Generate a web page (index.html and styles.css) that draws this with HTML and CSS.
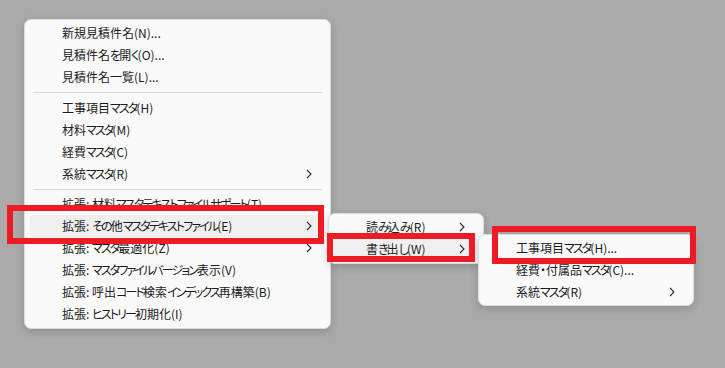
FILE: index.html
```html
<!DOCTYPE html>
<html lang="ja">
<head>
<meta charset="utf-8">
<title>Menu</title>
<link rel="stylesheet" href="styles.css">
</head>
<body>
<div class="desk">
  <div class="menu menu-main">
    <div class="item"><span class="label">新規見積件名(N)...</span></div>
    <div class="item"><span class="label">見積件名<span class="k">を</span>開<span class="k">く</span>(O)...</span></div>
    <div class="item"><span class="label">見積件名一覧(L)...</span></div>
    <div class="sep"></div>
    <div class="item"><span class="label">工事項目<span class="k">マスタ</span>(H)</span></div>
    <div class="item"><span class="label">材料<span class="k">マスタ</span>(M)</span></div>
    <div class="item"><span class="label">経費<span class="k">マスタ</span>(C)</span></div>
    <div class="item"><span class="label">系統<span class="k">マスタ</span>(R)</span><svg class="chev" viewBox="0 0 6 10" width="6" height="10"><polyline points="1,1 5,5 1,9"/></svg></div>
    <div class="sep"></div>
    <div class="item"><span class="label">拡張: 材料<span class="k">マスタテキストファイルサポート</span>(T)</span></div>
    <div class="item hot"><span class="label">拡張: <span class="k">その</span>他<span class="k">マスタテキストファイル</span>(E)</span><svg class="chev" viewBox="0 0 6 10" width="6" height="10"><polyline points="1,1 5,5 1,9"/></svg></div>
    <div class="item"><span class="label">拡張: <span class="k">マスタ</span>最適化(Z)</span><svg class="chev" viewBox="0 0 6 10" width="6" height="10"><polyline points="1,1 5,5 1,9"/></svg></div>
    <div class="item"><span class="label">拡張: <span class="k">マスタファイルバージョン</span>表示(V)</span></div>
    <div class="item"><span class="label">拡張: 呼出<span class="k">コード</span>検索<span class="k">インデックス</span>再構築(B)</span></div>
    <div class="item"><span class="label">拡張: <span class="k">ヒストリー</span>初期化(I)</span></div>
  </div>

  <div class="menu menu-sub2">
    <div class="item"><span class="label">読<span class="k">み</span>込<span class="k">み</span>(R)</span><svg class="chev" viewBox="0 0 6 10" width="6" height="10"><polyline points="1,1 5,5 1,9"/></svg></div>
    <div class="item hot"><span class="label">書<span class="k">き</span>出<span class="k">し</span>(W)</span><svg class="chev" viewBox="0 0 6 10" width="6" height="10"><polyline points="1,1 5,5 1,9"/></svg></div>
  </div>

  <div class="menu menu-sub3">
    <div class="item"><span class="label">工事項目<span class="k">マスタ</span>(H)...</span></div>
    <div class="item"><span class="label">経費・付属品<span class="k">マスタ</span>(C)...</span></div>
    <div class="item"><span class="label">系統<span class="k">マスタ</span>(R)</span><svg class="chev" viewBox="0 0 6 10" width="6" height="10"><polyline points="1,1 5,5 1,9"/></svg></div>
  </div>

  <div class="mark mark-1"></div>
  <div class="mark mark-2"></div>
  <div class="mark mark-3"></div>
</div>
</body>
</html>
```

FILE: styles.css
```css
html, body {
  margin: 0;
  padding: 0;
  background: #aaaaaa;
}

.desk {
  position: relative;
  width: 725px;
  height: 368px;
  overflow: hidden;
  font-family: "Noto Sans CJK JP", "Noto Sans", sans-serif;
  font-size: 12px;
  color: #1b1b1b;
}

.menu {
  position: absolute;
  box-sizing: border-box;
  display: flex;
  flex-direction: column;
  padding: 2px 0 3px;
  background: #f9f9f9;
  border: 1px solid #dcdcdc;
  border-radius: 7px;
  box-shadow: 0 3px 8px rgba(0, 0, 0, 0.16);
}

.menu-main {
  left: 24px;
  top: 19px;
  width: 307px;
  height: 310px;
}

.menu-sub2 {
  left: 328px;
  top: 213px;
  width: 156px;
  height: 51px;
}

.menu-sub3 {
  left: 478px;
  top: 234px;
  width: 216px;
  height: 72px;
}

.item {
  display: flex;
  align-items: center;
  justify-content: space-between;
  height: 22px;
  margin: 0 5px;
  padding: 0 13px 0 32px;
  border-radius: 4px;
  white-space: nowrap;
}

.item.hot {
  background: #efefef;
}

.label {
  font-feature-settings: "palt";
  line-height: 22px;
}

.k {
  letter-spacing: -1.9px;
}

.chev {
  flex: none;
  fill: none;
  stroke: #2a2a2a;
  stroke-width: 1.1;
}

.sep {
  height: 1px;
  margin: 4px 8px 4px 8px;
  background: #d9d9d9;
}

.mark {
  position: absolute;
  box-sizing: border-box;
  border: 6px solid #ed1c24;
}

.mark-1 {
  left: 7px;
  top: 205px;
  width: 317px;
  height: 39px;
}

.mark-2 {
  left: 327px;
  top: 233px;
  width: 148px;
  height: 29px;
}

.mark-3 {
  left: 492px;
  top: 226px;
  width: 204px;
  height: 38px;
}
```
